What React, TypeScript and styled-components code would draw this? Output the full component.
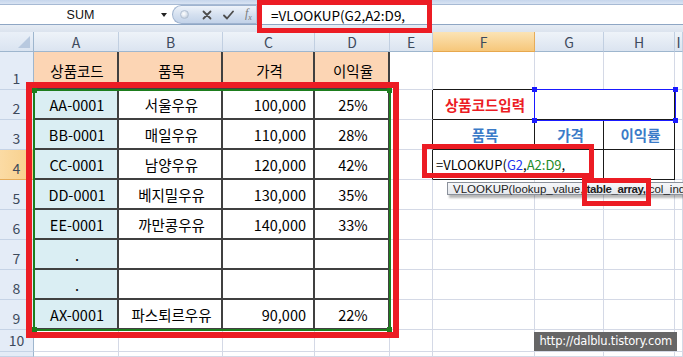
import React from 'react';
import styled, { createGlobalStyle } from 'styled-components';

const GlobalStyle = createGlobalStyle`
  html, body { margin: 0; padding: 0; background: #fff; overflow: hidden; }
  body { font-family: "Noto Sans CJK KR", "Noto Sans", sans-serif; }
  * { box-sizing: border-box; }
`;

const RED = '#EC1C24';
const PEACH = '#FCD5B4';
const AQUA = '#DAEEF3';
const HEAD_BLUE = '#3B7BC8';

const GRID = '1px solid #D4D9E6';
const DARK = '2px solid #404040';
const BLACK = '1px solid #1a1a1a';

type Align = 'left' | 'center' | 'right';
type CellData = { t?: React.ReactNode; span?: number; bg?: string; align?: Align; color?: string; bold?: boolean };

const COLS = ['A', 'B', 'C', 'D', 'E', 'F', 'G', 'H', 'I'];
const ACTIVE_COL = 5;
const ACTIVE_ROW = 4;

const Ref = styled.span<{ $c: string }>`
  color: ${p => p.$c};
`;

const formula = (
  <>
    =VLOOKUP(<Ref $c="#2233ee">G2</Ref>,<Ref $c="#1e8c2a">A2:D9</Ref>,
  </>
);

const head = (t: string): CellData => ({ t, bg: PEACH });
const code = (t: string): CellData => ({ t, bg: AQUA });
const price = (t: string): CellData => ({ t, align: 'right' });
const blue = (t: string): CellData => ({ t, color: HEAD_BLUE, bold: true });
const row = (c: string, n: string, p: string, r: string, ...rest: CellData[]): CellData[] => [
  code(c), { t: n }, price(p), { t: r }, ...rest,
];
const empty = (n: number): CellData[] => Array.from({ length: n }, () => ({}));

const sheet: CellData[][] = [
  [head('상품코드'), head('품목'), head('가격'), head('이익율'), ...empty(5)],
  row('AA-0001', '서울우유', '100,000', '25%', {}, { t: '상품코드입력', color: RED, bold: true }, { span: 2 }, {}),
  row('BB-0001', '매일우유', '110,000', '28%', {}, blue('품목'), blue('가격'), blue('이익률'), {}),
  row('CC-0001', '남양우유', '120,000', '42%', {}, { t: formula, span: 2, align: 'left' }, {}, {}),
  row('DD-0001', '베지밀우유', '130,000', '35%', ...empty(5)),
  row('EE-0001', '까만콩우유', '140,000', '33%', ...empty(5)),
  [code('.'), ...empty(8)],
  [code('.'), ...empty(8)],
  row('AX-0001', '파스퇴르우유', '90,000', '22%', ...empty(5)),
  empty(9),
  empty(9),
];

function borders(r: number, c: number, span: number) {
  const last = c + span - 1;
  let right = GRID;
  let bottom = GRID;
  if (c <= 3 && r <= 9) {
    right = DARK;
    bottom = DARK;
  }
  if (r >= 2 && r <= 4 && c >= 5 && last <= 7) {
    right = BLACK;
    bottom = BLACK;
  }
  if (r === 1 && c >= 5 && c <= 7) bottom = BLACK;
  if (r >= 2 && r <= 4 && c === 4) right = BLACK;
  return { right, bottom };
}

const App = () => {
  return (
    <>
      <GlobalStyle />
      <Page>
        <Toolbar>
          <TopStrip />
          <FormulaRow>
            <NameBox>
              <NameText>SUM</NameText>
              <DropArrow />
            </NameBox>
            <ButtonPill>
              <Dot />
              <svg width="10" height="10" viewBox="0 0 10 10">
                <path d="M1.5 1.5 L8.5 8.5 M8.5 1.5 L1.5 8.5" stroke="#4d4d4d" strokeWidth="1.8" strokeLinecap="round" />
              </svg>
              <svg width="11" height="10" viewBox="0 0 11 10">
                <path d="M1 5.5 L4 8.5 L10 1.5" stroke="#4d4d4d" strokeWidth="1.8" fill="none" strokeLinecap="round" strokeLinejoin="round" />
              </svg>
              <Fx>
                f<sub>x</sub>
              </Fx>
            </ButtonPill>
            <FormulaInput>
              =VLOOKUP(G2,A2:D9,
              <FormulaFrame />
            </FormulaInput>
          </FormulaRow>
          <Band />
        </Toolbar>

        <Sheet>
          <Corner />
          {COLS.map((c, i) => (
            <ColHead key={c} $c={i + 2} $active={i === ACTIVE_COL}>
              {c}
            </ColHead>
          ))}
          {sheet.map((cells, ri) => {
            const r = ri + 1;
            let col = 0;
            return (
              <React.Fragment key={r}>
                <RowHead $r={r + 1} $active={r === ACTIVE_ROW}>
                  {r <= 10 ? r : ''}
                </RowHead>
                {cells.map((cell, ci) => {
                  const span = cell.span ?? 1;
                  const c = col;
                  col += span;
                  const b = borders(r, c, span);
                  return (
                    <Cell
                      key={ci}
                      $r={r + 1}
                      $c={c + 2}
                      $span={span}
                      $bg={cell.bg}
                      $align={cell.align ?? 'center'}
                      $color={cell.color}
                      $bold={cell.bold}
                      $rb={b.right}
                      $bb={b.bottom}
                    >
                      {cell.t}
                    </Cell>
                  );
                })}
              </React.Fragment>
            );
          })}

          <RangeMark $area="3 / 2 / 11 / 6" $color="#1d7d1d" $w={2}>
            <Handle $color="#1d7d1d" $pos="tl" />
            <Handle $color="#1d7d1d" $pos="tr" />
            <Handle $color="#1d7d1d" $pos="bl" />
            <Handle $color="#1d7d1d" $pos="br" />
          </RangeMark>
          <RangeMark $area="3 / 8 / 4 / 10" $color="#1a1aff" $w={1}>
            <Handle $color="#1a1aff" $pos="tl" />
            <Handle $color="#1a1aff" $pos="tr" />
            <Handle $color="#1a1aff" $pos="bl" />
            <Handle $color="#1a1aff" $pos="br" />
          </RangeMark>

          <TableFrame />
          <CellFrame />

          <Tooltip>
            VLOOKUP(lookup_value, <Marked>table_array,</Marked> col_ind
          </Tooltip>

          <Watermark>http://dalblu.tistory.com</Watermark>
        </Sheet>
      </Page>
    </>
  );
};

export default App;

const Page = styled.div`
  position: relative;
  width: 683px;
  height: 357px;
  overflow: hidden;
  background: #fff;
`;

const Toolbar = styled.div`
  height: 32px;
  display: flex;
  flex-direction: column;
`;

const TopStrip = styled.div`
  height: 4px;
  background: linear-gradient(#c6d6ec, #d9e4f3);
`;

const FormulaRow = styled.div`
  height: 21px;
  display: flex;
  background: #fff;
  border-top: 1px solid #a7bad4;
  border-bottom: 1px solid #8ea6c4;
`;

const NameBox = styled.div`
  width: 170px;
  display: flex;
  align-items: center;
`;

const NameText = styled.div`
  width: 161px;
  text-align: center;
  font-family: "Liberation Sans", Arial, sans-serif;
  font-size: 12.5px;
  color: #111;
`;

const DropArrow = styled.div`
  width: 0;
  height: 0;
  border-left: 3.5px solid transparent;
  border-right: 3.5px solid transparent;
  border-top: 4px solid #222;
  margin-top: 1px;
`;

const ButtonPill = styled.div`
  width: 84px;
  margin-left: 2px;
  display: flex;
  align-items: center;
  gap: 11px;
  padding-left: 7px;
  border: 1px solid #9fb3cf;
  border-right: none;
  border-radius: 10px 0 0 10px;
  background: linear-gradient(#eef3fa, #d3dfef 55%, #c3d3e9);
`;

const Dot = styled.div`
  width: 9px;
  height: 9px;
  border-radius: 50%;
  margin-right: 2px;
  background: radial-gradient(circle at 40% 40%, #ffffff 0, #dfe6ef 45%, #a6b5c8 100%);
  border: 1px solid #b3c1d3;
`;

const Fx = styled.span`
  font-family: "Liberation Serif", "Times New Roman", serif;
  font-style: italic;
  font-size: 12px;
  color: #7a7a7a;
  line-height: 1;

  sub {
    font-size: 8px;
  }
`;

const FormulaInput = styled.div`
  position: relative;
  flex: 1;
  display: flex;
  align-items: center;
  padding-left: 14px;
  border-left: 1px solid #b4c4da;
  font-size: 13.5px;
  color: #000;
  white-space: nowrap;
`;

const FormulaFrame = styled.div`
  position: absolute;
  left: 0;
  top: -5px;
  width: 175px;
  height: 33px;
  border: 5px solid ${RED};
`;

const Band = styled.div`
  flex: 1;
  background: linear-gradient(#e6ecf4, #dbe3ee);
`;

const Sheet = styled.div`
  display: grid;
  grid-template-columns: 34px 85px 104px 92px 75px 43px 102px 69px 71px 1fr;
  grid-template-rows: 20px 38px repeat(8, 30px) 22px 1fr;
  height: 325px;
`;

const Corner = styled.div`
  grid-row: 1;
  grid-column: 1;
  position: relative;
  background: linear-gradient(#eaf0f8, #dae4f1);
  border-right: 1px solid #9eb6ce;
  border-bottom: 1px solid #9eb6ce;

  &::after {
    content: '';
    position: absolute;
    right: 3px;
    bottom: 3px;
    width: 0;
    height: 0;
    border-left: 12px solid transparent;
    border-bottom: 12px solid #b8c9df;
  }
`;

const ColHead = styled.div<{ $c: number; $active: boolean }>`
  grid-row: 1;
  grid-column: ${p => p.$c};
  display: flex;
  align-items: center;
  justify-content: center;
  font-size: 14px;
  color: #3d4a5c;
  background: ${p => (p.$active ? 'linear-gradient(#fbe3b5, #f6c77a)' : 'linear-gradient(#eef3f9, #dbe4f0)')};
  border-right: 1px solid ${p => (p.$active ? '#e6ac5a' : '#c1cfe1')};
  border-bottom: 1px solid ${p => (p.$active ? '#e7a84e' : '#9eb6ce')};
`;

const RowHead = styled.div<{ $r: number; $active: boolean }>`
  grid-row: ${p => p.$r};
  grid-column: 1;
  display: flex;
  align-items: flex-end;
  justify-content: center;
  overflow: hidden;
  padding-bottom: 2px;
  font-size: 14px;
  line-height: 18px;
  color: #3d4a5c;
  background: ${p => (p.$active ? 'linear-gradient(90deg, #fbdba4, #f8cf8a)' : '#e4ecf7')};
  border-right: 1px solid ${p => (p.$active ? '#e6ac5a' : '#9eb6ce')};
  border-bottom: 1px solid ${p => (p.$active ? '#e6ac5a' : '#c5d3e6')};
`;

const Cell = styled.div<{
  $r: number;
  $c: number;
  $span: number;
  $bg?: string;
  $align: Align;
  $color?: string;
  $bold?: boolean;
  $rb: string;
  $bb: string;
}>`
  grid-row: ${p => p.$r};
  grid-column: ${p => p.$c} / span ${p => p.$span};
  display: flex;
  align-items: center;
  justify-content: ${p => (p.$align === 'left' ? 'flex-start' : p.$align === 'right' ? 'flex-end' : 'center')};
  padding: ${p => (p.$align === 'right' ? '0 7px 0 0' : '0 0 0 3px')};
  min-width: 0;
  white-space: nowrap;
  font-size: ${p => (p.$align === 'left' ? '13px' : '14.5px')};
  font-weight: ${p => (p.$bold ? 700 : 400)};
  color: ${p => p.$color ?? '#000'};
  background: ${p => p.$bg ?? '#fff'};
  border-right: ${p => p.$rb};
  border-bottom: ${p => p.$bb};
`;

const RangeMark = styled.div<{ $area: string; $color: string; $w: number }>`
  grid-area: ${p => p.$area};
  position: relative;
  z-index: 2;
  margin: -1px;
  border: ${p => p.$w}px solid ${p => p.$color};
`;

const Handle = styled.div<{ $color: string; $pos: 'tl' | 'tr' | 'bl' | 'br' }>`
  position: absolute;
  width: 5px;
  height: 5px;
  background: ${p => p.$color};
  ${p => (p.$pos[0] === 't' ? 'top: -3px;' : 'bottom: -3px;')}
  ${p => (p.$pos[1] === 'l' ? 'left: -3px;' : 'right: -3px;')}
`;

const TableFrame = styled.div`
  grid-area: 3 / 2 / 11 / 6;
  z-index: 3;
  margin: -8px -9px -8px -8px;
  border: 6px solid ${RED};
`;

const CellFrame = styled.div`
  grid-area: 5 / 7 / 6 / 9;
  z-index: 3;
  margin: -6px 10px 2px -11px;
  border: 5px solid ${RED};
`;

const Tooltip = styled.div`
  grid-area: 6 / 7 / 7 / 11;
  justify-self: start;
  align-self: start;
  z-index: 4;
  margin: 2px 0 0 14px;
  height: 13px;
  padding: 0 5px;
  display: flex;
  align-items: center;
  white-space: pre;
  font-family: "Liberation Sans", Arial, sans-serif;
  font-size: 11.5px;
  color: #222;
  background: linear-gradient(#f6f7f9, #e5e8ed);
  border: 1px solid #8b919b;
  box-shadow: 2px 3px 2px rgba(0, 0, 0, 0.28);
`;

const Marked = styled.span`
  position: relative;
  font-weight: 700;
  letter-spacing: -0.4px;

  &::after {
    content: '';
    position: absolute;
    left: -5px;
    right: -5px;
    top: -5px;
    bottom: -11px;
    border: 5px solid ${RED};
  }
`;

const Watermark = styled.div`
  grid-area: 11 / 7 / 12 / 11;
  justify-self: end;
  align-self: center;
  z-index: 4;
  margin-right: 6px;
  padding: 0 5px;
  height: 19px;
  display: flex;
  align-items: center;
  background: #666;
  color: #fff;
  font-family: "DejaVu Sans", sans-serif;
  font-size: 11.5px;
  letter-spacing: -0.2px;
`;
